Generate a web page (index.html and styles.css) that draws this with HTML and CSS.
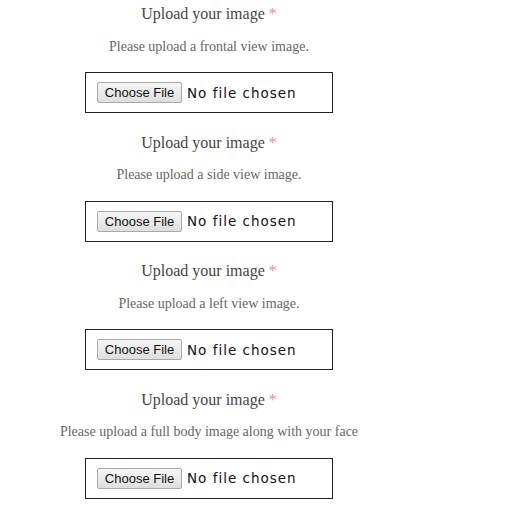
FILE: index.html
```html
<!DOCTYPE html>
<html>
<head>
<meta charset="utf-8">
<link rel="stylesheet" href="styles.css">
</head>
<body>
<div class="form">
  <div class="field">
    <div class="label">Upload your image <span class="req">*</span></div>
    <div class="hint">Please upload a frontal view image.</div>
    <div class="filebox"><button class="choose" type="button">Choose File</button><span class="status">No file chosen</span></div>
  </div>
  <div class="field">
    <div class="label">Upload your image <span class="req">*</span></div>
    <div class="hint">Please upload a side view image.</div>
    <div class="filebox"><button class="choose" type="button">Choose File</button><span class="status">No file chosen</span></div>
  </div>
  <div class="field">
    <div class="label">Upload your image <span class="req">*</span></div>
    <div class="hint">Please upload a left view image.</div>
    <div class="filebox"><button class="choose" type="button">Choose File</button><span class="status">No file chosen</span></div>
  </div>
  <div class="field">
    <div class="label">Upload your image <span class="req">*</span></div>
    <div class="hint">Please upload a full body image along with your face</div>
    <div class="filebox"><button class="choose" type="button">Choose File</button><span class="status">No file chosen</span></div>
  </div>
</div>
</body>
</html>
```
FILE: styles.css
```css
html, body {
  margin: 0;
  padding: 0;
  background: #fff;
}
body {
  padding: 4px 0 0 8px;
}
.form {
  width: 402px;
  display: flex;
  flex-direction: column;
  gap: 19.5px;
}
.field {
  display: flex;
  flex-direction: column;
  align-items: center;
}
.label {
  font-family: "Liberation Serif", "DejaVu Serif", serif;
  font-size: 16px;
  line-height: 20px;
  color: #454545;
}
.req {
  color: #f5879b;
}
.hint {
  margin-top: 13.5px;
  font-family: "Liberation Serif", "DejaVu Serif", serif;
  font-size: 14px;
  line-height: 18px;
  color: #666;
}
.filebox {
  margin-top: 16.5px;
  box-sizing: border-box;
  width: 248px;
  height: 41px;
  border: 1px solid #222;
  padding: 9px 11px;
  display: flex;
  align-items: center;
  gap: 5px;
}
.choose {
  box-sizing: border-box;
  height: 21px;
  width: 85px;
  padding: 0;
  margin: 0;
  font-family: "Liberation Sans", Arial, sans-serif;
  font-size: 13px;
  color: #111;
  background: linear-gradient(#f6f6f6, #dedede);
  border: 1px solid #a9a9a9;
  border-radius: 2px;
}
.status {
  font-family: "DejaVu Sans", sans-serif;
  font-size: 13.5px;
  letter-spacing: 1px;
  color: #111;
}
```
